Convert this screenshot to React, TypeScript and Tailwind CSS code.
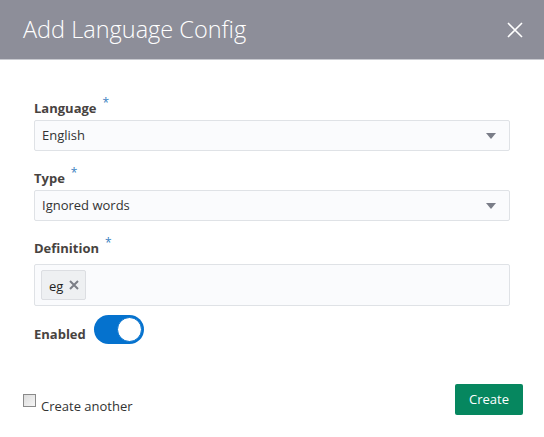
import React from "react";

function Caret() {
  return (
    <svg width="10" height="6" viewBox="0 0 10 6" className="shrink-0">
      <path d="M0 0 H10 L5 6 Z" fill="#7a7d88" />
    </svg>
  );
}

function Label({ text, className = "" }: { text: string; className?: string }) {
  return (
    <div className={`flex h-5 items-center text-[13px] font-bold text-[#48433f] ${className}`}>
      {text}
      <span className="relative -top-[6px] ml-[6px] text-[12px] font-normal text-[#3a7fc1]">*</span>
    </div>
  );
}

function Select({ value }: { value: string }) {
  return (
    <div className="mt-[1px] flex h-[31px] items-center justify-between rounded-[2px] border border-[#dfe2e6] bg-[#fafbfd] pl-[7px] pr-[13px] text-[13px] text-[#333333]">
      <span>{value}</span>
      <Caret />
    </div>
  );
}

export default function App() {
  const [enabled, setEnabled] = React.useState(true);
  const [another, setAnother] = React.useState(false);
  return (
    <div className="h-[437px] w-[544px] bg-white font-['Open_Sans',sans-serif]">
      <div className="flex h-[60px] items-center justify-between border-b border-[#c9cad0] bg-[#8d8e99] pl-[23px] pr-[21px]">
        <h1 className="text-[23.5px] font-light text-white">Add Language Config</h1>
        <svg width="16" height="16" viewBox="0 0 16 16">
          <path d="M1 1 L15 15 M15 1 L1 15" stroke="white" strokeWidth="1.6" />
        </svg>
      </div>

      <div className="px-[34px] pt-[39px]">
        <Label text="Language" />
        <Select value="English" />

        <Label text="Type" className="mt-[18px]" />
        <Select value="Ignored words" />

        <Label text="Definition" className="mt-[18px]" />
        <div className="mt-[5px] flex h-[42px] items-center rounded-[2px] border border-[#dfe2e6] bg-[#fafbfd] px-[6px]">
          <div className="flex h-[30px] items-center gap-[6px] rounded-[2px] border border-[#dcdee2] bg-[#eef0f2] pl-[7px] pr-[6px] text-[13px] text-[#222]">
            <span className="pt-[3px]">eg</span>
            <svg width="10" height="10" viewBox="0 0 10 10">
              <path d="M1 1 L9 9 M9 1 L1 9" stroke="#7b7e86" strokeWidth="2" />
            </svg>
          </div>
        </div>

        <div className="mt-[9px] flex items-start">
          <span className="mt-[11px] text-[13px] font-bold leading-[16px] text-[#48433f]">Enabled</span>
          <button
            onClick={() => setEnabled(!enabled)}
            className={`ml-[8px] flex h-[29px] w-[50px] items-center rounded-full ${enabled ? "justify-end bg-[#0572ce]" : "justify-start bg-[#c3c5cb]"} p-[2px]`}
          >
            <span className="h-[25px] w-[25px] rounded-full border border-[#0572ce] bg-white" />
          </button>
        </div>
      </div>

      <div className="mt-[40px] flex items-start justify-between pl-[23px] pr-[21px]">
        <label className="mt-[10px] flex cursor-pointer items-start gap-[5px] text-[13px] text-[#333]">
          <input
            type="checkbox"
            checked={another}
            onChange={() => setAnother(!another)}
            className="mt-0 h-[13px] w-[13px] appearance-none border border-[#8a8a8a] bg-gradient-to-br from-[#dcdcdc] to-[#f6f6f6]"
          />
          <span className="mt-[3px] leading-[18px]">Create another</span>
        </label>
        <button className="h-[31px] rounded-[2px] bg-[#06875f] px-[14px] text-[13px] text-white">Create</button>
      </div>
    </div>
  );
}
